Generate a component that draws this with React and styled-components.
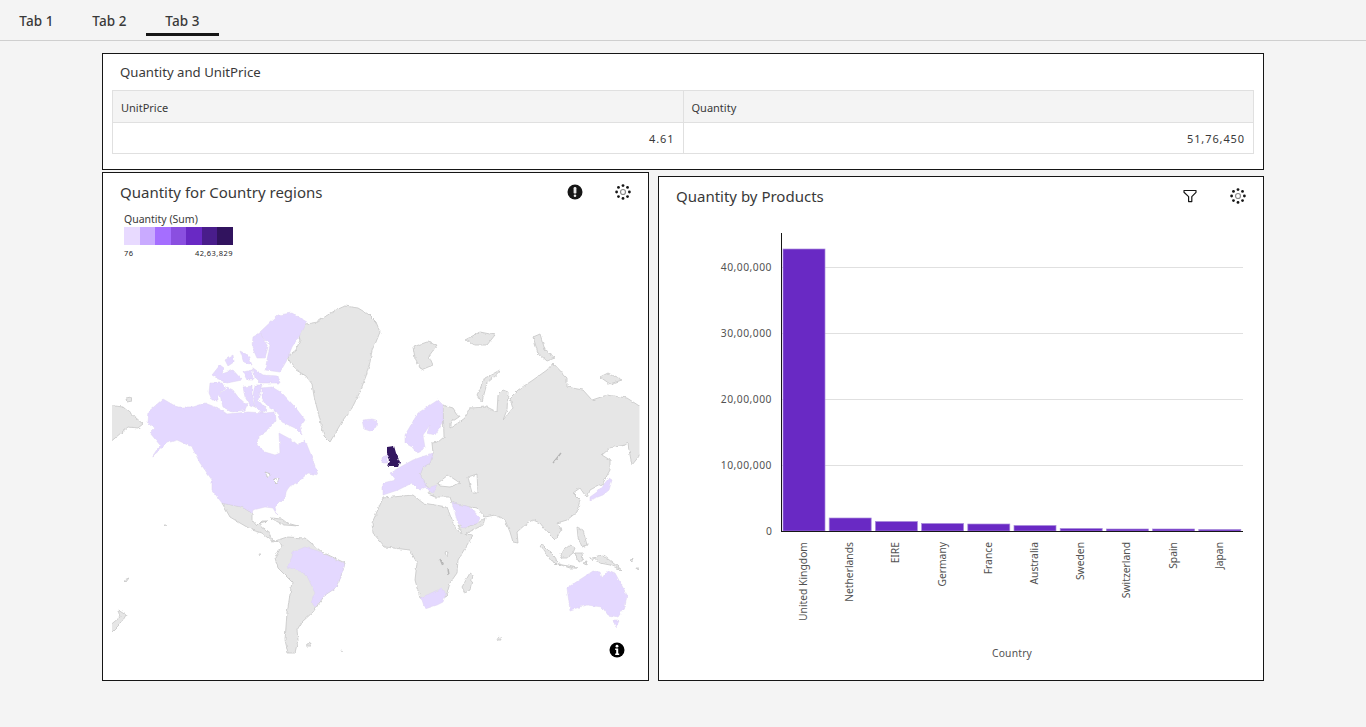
import styled, { createGlobalStyle } from 'styled-components';

const GlobalStyle = createGlobalStyle`
  html, body {
    margin: 0;
    padding: 0;
    background: #f4f4f4;
  }
  body {
    font-family: 'Noto Sans', 'Liberation Sans', sans-serif;
    color: #161616;
  }
`;

const Page = styled.div`
  width: 1366px;
  height: 727px;
  overflow: hidden;
`;
const TabBar = styled.div`
  display: flex;
  height: 40px;
  border-bottom: 1px solid #cfcfcf;
`;
const Tab = styled.div`
  width: 73px;
  height: 36px;
  box-sizing: border-box;
  padding-top: 13px;
  text-align: center;
  font-size: 13.5px;
  line-height: 16px;
  font-weight: 500;
  letter-spacing: 0.1px;
  color: #393939;
  border-bottom: 3px solid ${(p) => (p.$active ? '#161616' : 'transparent')};
`;
const Board = styled.div`
  width: 1162px;
  margin: 12px 0 0 102px;
  display: grid;
  grid-template-columns: 547px 606px;
  column-gap: 9px;
`;
const Card = styled.div`
  position: relative;
  box-sizing: border-box;
  background: #fff;
  border: 1.5px solid #161616;
`;
const SummaryCard = styled(Card)`
  grid-column: 1 / 3;
  height: 117px;
  padding: 0 9px;
  margin-bottom: 2px;
`;
const MapCard = styled(Card)`
  height: 509px;
  display: flex;
  flex-direction: column;
`;
const ChartCard = styled(Card)`
  height: 505px;
  margin-top: 4px;
  display: flex;
  flex-direction: column;
`;
const SummaryTitle = styled.div`
  padding: 10px 0 0 8px;
  height: 26px;
  font-size: 13.2px;
  line-height: 17px;
  color: #393939;
`;
const Table = styled.table`
  width: 1142px;
  border-collapse: collapse;
  table-layout: fixed;
  font-size: 11px;
  color: #393939;
`;
const HeadCell = styled.th`
  height: 32px;
  padding: 2px 8px 0;
  box-sizing: border-box;
  background: #f4f4f4;
  border: 1px solid #e0e0e0;
  font-weight: 400;
  text-align: left;
`;
const ValueCell = styled.td`
  height: 30px;
  padding: 0 8px;
  border: 1px solid #e0e0e0;
  text-align: right;
  letter-spacing: 0.9px;
`;
const CardHeader = styled.div`
  display: flex;
  align-items: center;
  box-sizing: border-box;
  height: ${(p) => p.$height}px;
  padding: 0 16px 2px 17px;
  flex: none;
`;
const CardTitle = styled.div`
  flex: 1;
  font-size: 15px;
  color: #393939;
`;
const IconSlot = styled.div`
  width: 18px;
  height: 18px;
  margin-left: ${(p) => p.$gap || 0}px;
  display: flex;
  align-items: center;
  justify-content: center;
`;
const Legend = styled.div`
  flex: none;
  box-sizing: border-box;
  width: 109px;
  margin-left: 21px;
  height: 49px;
  padding-top: 1px;
`;
const LegendTitle = styled.div`
  font-size: 10.5px;
  line-height: 13px;
  margin-bottom: 1px;
  color: #393939;
`;
const Ramp = styled.div`
  display: flex;
  height: 18px;
`;
const RampStep = styled.div`
  flex: 1;
  background: ${(p) => p.$color};
`;
const RampLabels = styled.div`
  display: flex;
  justify-content: space-between;
  margin-top: 3px;
  font-size: 7.5px;
  line-height: 10px;
  letter-spacing: 0.45px;
  color: #262626;
`;
const MapSvg = styled.svg`
  display: block;
  flex: none;
  width: 545px;
  height: 418px;
`;
const ChartSvg = styled.svg`
  display: block;
  flex: none;
  width: 604px;
  height: 462px;
`;
const InfoBadge = styled.div`
  position: absolute;
  right: 23px;
  bottom: 23px;
  width: 16px;
  height: 16px;
`;
const AxisText = styled.text`
  font-family: 'Noto Sans', 'Liberation Sans', sans-serif;
  font-size: 10.3px;
  letter-spacing: ${(p) => p.$spacing || 0}px;
  fill: #525252;
`;

const RAMP = ['#e8daff', '#c9aaff', '#a56eff', '#8a4fe0', '#6929c4', '#491d8b', '#31135e'];

const GREY_LAND = [
  // greenland
  '345,306 358,308 368,314 376,322 380,332 376,342 372,350 370,362 366,376 360,392 352,408 343,420 336,432 330,442 324,436 320,420 317,408 314,396 312,384 306,376 296,370 290,362 288,356 296,350 300,340 298,330 306,324 318,322 326,316 336,310',
  // far east russia on the left edge
  '108,405 123,407 135,417 143,424 138,428 128,427 108,444',
  '126,399 131,398 132,401 127,402',
  // eurasia
  '443,405 453,408 459,417 450,423 450,428 458,423 465,418 470,408 487,407 497,412 498,395 503,390 508,392 507,410 503,420 513,408 510,398 518,390 533,380 547,370 553,363 567,378 567,387 583,390 592,400 607,395 627,398 644,409 644,450 632,465 629,450 628,443 625,445 610,448 602,455 610,460 610,470 603,483 590,490 587,498 580,488 573,493 580,500 577,512 567,520 557,523 562,530 555,540 547,532 540,523 533,520 527,523 517,532 518,543 513,542 510,532 505,520 495,515 485,517 477,508 470,507 452,503 450,497 435,497 428,494 431,488 427,487 420,475 423,467 430,463 433,453 432,443 438,442 444,437',
  // oman and yemen
  '458,525 465,528 478,523 485,518 483,525 463,535',
  // africa
  '383,498 413,495 423,503 447,507 453,523 460,533 473,535 467,545 458,560 457,573 450,583 446,597 420,598 415,580 417,563 410,550 385,547 373,533 372,523',
  '462,587 470,573 473,575 470,590 465,593',
  // central and south america
  '222,503 230,517 240,523 252,530 262,533 268,538 273,542 278,540 287,537 305,538 322,552 345,563 343,570 337,587 325,595 313,612 302,622 297,630 298,640 295,653 288,653 285,640 287,613 292,582 278,568 275,558 282,545 278,542 272,540 267,530 262,528 260,523 267,521 262,521 257,526 252,520 252,513 242,507 232,505',
  '271,518 282,519 287,523 298,526 285,525 278,522',
  '307,644 311,643 310,646 306,646',
  '341,650 343,651 342,652',
  '259,554 261,554 260,556',
  '164,524 166,524 165,526',
  '124,580 129,578 126,582',
  // new zealand
  '118,610 126,615 122,622 108,636 108,627 120,617',
  // arctic islands
  '413,347 427,342 437,345 429,356 433,365 421,370 415,358',
  '465,340 480,332 495,335 487,345 475,345',
  '533,337 540,334 545,350 555,358 547,361 538,353',
  '600,377 608,373 622,380 610,384',
  '477,395 485,378 500,370 499,373 487,383 482,402',
  // islands of south east asia
  '540,546 543,545 555,557 557,563 552,562',
  '555,563 577,568 570,568',
  '560,553 570,545 575,548 573,553 567,558 562,558',
  '575,553 582,553 583,560 578,562',
  '577,527 583,530 587,545 582,547 578,537',
  '593,557 603,555 622,570 610,565 600,563',
  '630,560 633,559 632,562',
  '636,568 639,568 637,570',
  '497,638 501,637 502,640 498,640',
  '583,563 587,562 586,565',
  '590,558 594,558 592,561',
];

const LILAC_LAND = [
  // canadian arctic
  '260,332 278,315 292,313 307,322 302,332 292,347 287,360 280,372 265,370 268,355 270,345 262,337',
  '253,337 260,333 268,347 265,358 257,358 252,347',
  '225,360 233,355 234,362 228,366',
  '240,351 248,355 252,365 244,362',
  '212,375 220,365 224,368 222,374 233,370 242,380 227,383 220,380',
  '243,372 252,370 253,380 247,380',
  '253,368 263,375 278,376 280,383 260,383 255,378',
  '210,383 222,383 225,388 218,397 218,400 212,400 209,393',
  '220,395 227,387 233,390 238,397 247,405 245,410 232,412 223,407',
  '243,387 252,386 252,397 255,407 250,405 245,397',
  '255,385 262,385 258,400 267,410 262,413 255,407 253,395',
  '262,388 272,387 282,393 295,407 305,420 300,427 302,435 295,428 282,422 277,412 268,407 262,398',
  // usa, canada and alaska
  '148,412 163,399 177,407 192,407 205,403 220,409 227,414 248,412 265,413 275,412 276,420 268,430 258,437 257,445 265,452 275,455 280,453 279,433 292,440 298,445 305,440 313,460 318,475 308,473 298,482 290,486 287,490 285,497 275,507 277,515 273,508 265,507 253,510 252,513 242,507 232,505 222,503 212,490 212,480 200,463 192,447 177,440 167,443 152,457 160,445 150,433 155,428 147,422',
  // iceland
  '362,420 372,419 377,420 376,427 370,431 364,429',
  // scandinavia
  '405,435 418,413 438,400 443,405 443,423 435,435 427,433 430,425 423,435 425,448 417,453 412,447 405,443',
  // europe
  '395,470 413,460 433,453 430,463 423,467 420,475 427,487 420,490 412,483 398,490 383,495 383,483 395,480 390,473',
  '427,488 437,485 432,494',
  '382,457 388,455 388,463 382,463',
  // saudi arabia
  '452,503 470,507 480,518 478,523 463,528 458,523',
  // brazil
  '293,552 305,547 318,551 345,564 343,570 337,587 325,595 315,607 311,602 315,593 308,578 302,572 287,567 292,557',
  // south africa
  '420,598 442,588 446,593 443,602 437,605 425,609 422,600',
  // japan
  '590,500 603,495 609,490 612,480 609,478 604,484 597,492 590,497',
  // australia
  '567,588 587,575 593,571 600,572 602,578 608,570 615,573 627,595 625,607 618,617 608,615 602,607 587,605 570,610',
  '613,621 619,621 616,627',
];

const WHITE_WATER = [
  '438,483 448,475 460,483 450,487 440,486',
  '468,477 477,474 478,493 472,493',
  '445,553 448,552 447,557',
  '265,472 271,474 268,478',
  '273,480 279,478 277,484',
];

const BARS = [
  ['United Kingdom', 249],
  ['Netherlands', 518],
  ['EIRE', 521.5],
  ['Germany', 523.5],
  ['France', 524],
  ['Australia', 525.5],
  ['Sweden', 528.5],
  ['Switzerland', 529],
  ['Spain', 529],
  ['Japan', 529.5],
];
const TICKS = [
  ['40,00,000', 267],
  ['30,00,000', 333],
  ['20,00,000', 399],
  ['10,00,000', 465],
];

function InsightIcon() {
  const dots = [0, 45, 90, 135, 180, 225, 270, 315];
  return (
    <svg width="16" height="16" viewBox="0 0 16 16">
      {dots.map((a) => (
        <circle
          key={a}
          cx={8 + 6.4 * Math.cos((a * Math.PI) / 180)}
          cy={8 + 6.4 * Math.sin((a * Math.PI) / 180)}
          r="1.4"
          fill="#161616"
        />
      ))}
      <circle cx="8" cy="8" r="2.5" fill="none" stroke="#8d8d8d" strokeWidth="1.2" />
    </svg>
  );
}

function AlertIcon() {
  return (
    <svg width="16" height="16" viewBox="0 0 16 16">
      <circle cx="8" cy="8" r="7.5" fill="#161616" />
      <rect x="6.6" y="3" width="2.8" height="6.6" rx="1.2" fill="#e8e8e8" />
      <circle cx="8" cy="11.8" r="1.3" fill="#e8e8e8" />
    </svg>
  );
}

function FilterIcon() {
  return (
    <svg width="16" height="16" viewBox="0 0 16 16">
      <path
        d="M2 2.5h12v1.8L9.8 8.6v5H6.6v-5L2 4.3z"
        fill="none"
        stroke="#161616"
        strokeWidth="1.2"
        strokeLinejoin="round"
      />
    </svg>
  );
}

function InfoIcon() {
  return (
    <svg width="16" height="16" viewBox="0 0 16 16">
      <circle cx="8" cy="8" r="7.5" fill="#000" />
      <circle cx="8" cy="4.2" r="1.4" fill="#fff" />
      <path d="M6.2 6.6h3v5h1v1.4H6.2v-1.4h1v-3.6h-1z" fill="#fff" />
    </svg>
  );
}

function WorldMap() {
  return (
    <MapSvg viewBox="103 261 545 418">
      <defs>
        <clipPath id="mapFrame">
          <rect x="112" y="262" width="527.5" height="418" />
        </clipPath>
        {/* rough coastlines, the polygons alone are too clean */}
        <filter id="coast" filterUnits="userSpaceOnUse" x="90" y="250" width="570" height="440">
          <feTurbulence type="fractalNoise" baseFrequency="0.22" numOctaves="2" seed="4" />
          <feDisplacementMap in="SourceGraphic" scale="3.2" xChannelSelector="R" yChannelSelector="G" />
          <feGaussianBlur stdDeviation="0.25" />
        </filter>
      </defs>
      <g clipPath="url(#mapFrame)">
        <g filter="url(#coast)">
          <g stroke="#c6c6c6" strokeWidth="0.8" strokeLinejoin="round" fill="#e6e6e6">
            {GREY_LAND.map((p) => (
              <polygon key={p} points={p} />
            ))}
          </g>
          <g stroke="#dcd3ee" strokeWidth="0.5" strokeLinejoin="round" fill="#e4d8ff">
            {LILAC_LAND.map((p) => (
              <polygon key={p} points={p} />
            ))}
          </g>
          <polygon
            points="387,447 394,446 396,453 400,462 398,467 388,467 390,460 387,453"
            fill="#31135e"
          />
          <g stroke="#c6c6c6" strokeWidth="0.8" strokeLinejoin="round" fill="#fff">
            {WHITE_WATER.map((p) => (
              <polygon key={p} points={p} />
            ))}
          </g>
          <path d="M553 463 L561 453" stroke="#b5b5b5" strokeWidth="1.4" fill="none" />
          <path d="M440 559 L443 566 M448 568 L449 575" stroke="#b5b5b5" strokeWidth="1.4" fill="none" />
        </g>
      </g>
    </MapSvg>
  );
}

function BarChart() {
  return (
    <ChartSvg viewBox="659 217 604 462">
      {TICKS.map(([label, y]) => (
        <g key={label}>
          <line x1="781" x2="1243" y1={y + 0.5} y2={y + 0.5} stroke="#e0e0e0" />
          <AxisText x="772" y={y + 4} textAnchor="end" $spacing={0.5}>
            {label}
          </AxisText>
        </g>
      ))}
      <AxisText x="772" y="535" textAnchor="end">
        0
      </AxisText>
      {BARS.map(([name, top], i) => {
        const x = 783 + i * 46.2;
        return (
          <g key={name}>
            <rect
              x={x}
              y={top}
              width="42"
              height={531 - top}
              fill="#6929c4"
              stroke="#a98bdc"
              strokeWidth="0.7"
            />
            <AxisText
              textAnchor="end"
              transform={`translate(${x + 24} 542) rotate(-90)`}
            >
              {name}
            </AxisText>
          </g>
        );
      })}
      <line x1="781.5" x2="781.5" y1="233" y2="531" stroke="#161616" />
      <line x1="781" x2="1243" y1="531.5" y2="531.5" stroke="#161616" />
      <AxisText x="1012" y="657" textAnchor="middle" $spacing={0.2}>
        Country
      </AxisText>
    </ChartSvg>
  );
}

export default function App() {
  return (
    <Page>
      <GlobalStyle />
      <TabBar>
        <Tab>Tab 1</Tab>
        <Tab>Tab 2</Tab>
        <Tab $active>Tab 3</Tab>
      </TabBar>
      <Board>
        <SummaryCard>
          <SummaryTitle>Quantity and UnitPrice</SummaryTitle>
          <Table>
            <thead>
              <tr>
                <HeadCell>UnitPrice</HeadCell>
                <HeadCell>Quantity</HeadCell>
              </tr>
            </thead>
            <tbody>
              <tr>
                <ValueCell>4.61</ValueCell>
                <ValueCell>51,76,450</ValueCell>
              </tr>
            </tbody>
          </Table>
        </SummaryCard>
        <MapCard>
          <CardHeader $height={39}>
            <CardTitle>Quantity for Country regions</CardTitle>
            <IconSlot>
              <AlertIcon />
            </IconSlot>
            <IconSlot $gap={30}>
              <InsightIcon />
            </IconSlot>
          </CardHeader>
          <Legend>
            <LegendTitle>Quantity (Sum)</LegendTitle>
            <Ramp>
              {RAMP.map((c) => (
                <RampStep key={c} $color={c} />
              ))}
            </Ramp>
            <RampLabels>
              <span>76</span>
              <span>42,63,829</span>
            </RampLabels>
          </Legend>
          <WorldMap />
          <InfoBadge>
            <InfoIcon />
          </InfoBadge>
        </MapCard>
        <ChartCard>
          <CardHeader $height={40}>
            <CardTitle>Quantity by Products</CardTitle>
            <IconSlot>
              <FilterIcon />
            </IconSlot>
            <IconSlot $gap={30}>
              <InsightIcon />
            </IconSlot>
          </CardHeader>
          <BarChart />
        </ChartCard>
      </Board>
    </Page>
  );
}
